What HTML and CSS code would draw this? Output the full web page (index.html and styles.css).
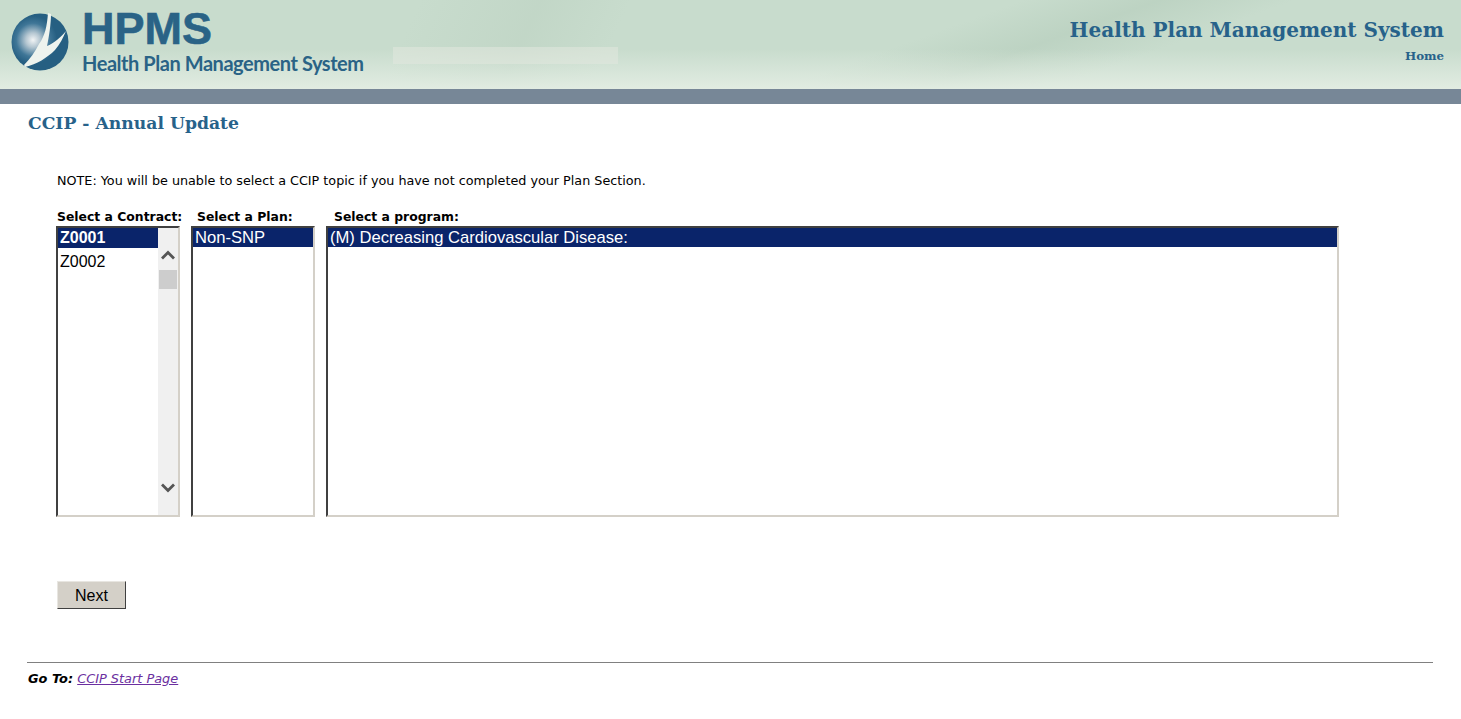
FILE: index.html
```html
<!DOCTYPE html>
<html lang="en">
<head>
<meta charset="utf-8">
<title>CCIP - Annual Update</title>
<link rel="stylesheet" href="styles.css">
</head>
<body>
<header class="header">
  <div class="logo">
    <svg class="logo-mark" width="60" height="60" viewBox="0 0 60 60" aria-hidden="true">
      <defs>
        <radialGradient id="globe" gradientUnits="userSpaceOnUse" cx="23" cy="28" r="24">
          <stop offset="0" stop-color="#f2f4f5"/>
          <stop offset="0.3" stop-color="#b4c6d1"/>
          <stop offset="0.7" stop-color="#3f7697"/>
          <stop offset="1" stop-color="#265f82"/>
        </radialGradient>
      </defs>
      <circle cx="30" cy="30" r="28.5" fill="url(#globe)"/>
      <path d="M38 1 C37 14 35 24 29 32 C25 40 20 47 14 53 L15 55 C27 52 37 46 45 38 C50 32 53 26 56 19 C52 24 43 32 37 34 C39 25 41 12 41 2 Z" fill="#eef3ee"/>
    </svg>
    <div class="logo-text">
      <div class="logo-hpms">HPMS</div>
      <div class="logo-name">Health Plan Management System</div>
    </div>
  </div>
  <div class="patch"></div>
  <div class="header-right">
    <div class="system-title">Health Plan Management System</div>
    <a class="home" href="#">Home</a>
  </div>
</header>
<div class="band"></div>
<main class="main">
  <h1 class="page-title">CCIP - Annual Update</h1>
  <div class="form">
    <p class="note">NOTE: You will be unable to select a CCIP topic if you have not completed your Plan Section.</p>
    <div class="pickers">
      <div class="picker picker-contract">
        <div class="picker-label">Select a Contract:</div>
        <div class="listbox">
          <div class="options">
            <div class="option option-bold selected">Z0001</div>
            <div class="option option-second">Z0002</div>
          </div>
          <div class="scrollbar">
            <svg class="chev" width="16" height="12" viewBox="0 0 16 12" aria-hidden="true"><path d="M2 9.5 L8 3.5 L14 9.5" fill="none" stroke="#555" stroke-width="2.8"/></svg>
            <div class="thumb"></div>
            <svg class="chev chev-down" width="16" height="12" viewBox="0 0 16 12" aria-hidden="true"><path d="M2 2.5 L8 8.5 L14 2.5" fill="none" stroke="#555" stroke-width="2.8"/></svg>
          </div>
        </div>
      </div>
      <div class="picker picker-plan">
        <div class="picker-label">Select a Plan:</div>
        <div class="listbox">
          <div class="options"><div class="option selected">Non-SNP</div></div>
        </div>
      </div>
      <div class="picker picker-program">
        <div class="picker-label">Select a program:</div>
        <div class="listbox">
          <div class="options"><div class="option selected">(M) Decreasing Cardiovascular Disease:</div></div>
        </div>
      </div>
    </div>
    <button class="next" type="button">Next</button>
  </div>
  <footer class="goto">
    <b class="goto-label">Go To:</b> <a class="goto-link" href="#">CCIP Start Page</a>
  </footer>
</main>
</body>
</html>
```
FILE: styles.css
```css
* { box-sizing: border-box; }
html, body { margin: 0; padding: 0; }
body {
  background: #fff;
  color: #000;
  font-family: "DejaVu Sans", Verdana, sans-serif;
  overflow: hidden;
}
.header {
  position: relative;
  height: 89px;
  display: flex;
  justify-content: space-between;
  padding: 11px 17px 0 10px;
  background:
    linear-gradient(180deg, rgba(227,237,227,0) 55%, rgba(227,237,227,0.95) 100%),
    linear-gradient(160deg, rgba(200,220,205,0) 60%, rgba(184,207,190,0.7) 68%, rgba(200,220,205,0) 76%),
    linear-gradient(115deg, rgba(200,220,205,0) 28%, rgba(190,211,195,0.6) 36%, rgba(200,220,205,0) 42%),
    #c8dccd;
}
.logo { display: flex; gap: 11px; align-items: flex-start; }
.logo-mark { margin-top: 1px; }
.logo-text { color: #2a6386; font-family: "Liberation Sans", Arial, sans-serif; }
.logo-hpms {
  font-size: 45px;
  line-height: 36px;
  font-weight: 700;
  height: 36px;
  padding-left: 1px;
  -webkit-text-stroke: 0.6px #2a6386;
}
.logo-name {
  font-family: Lato, sans-serif;
  font-size: 20px;
  letter-spacing: -0.45px;
  line-height: 26px;
  font-weight: 700;
  margin-top: 3px;
  padding-left: 1px;
  white-space: nowrap;
}
.patch {
  position: absolute;
  left: 393px;
  top: 47px;
  width: 225px;
  height: 17px;
  background: rgba(225,232,222,0.55);
}
.header-right { text-align: right; padding-top: 6px; }
.system-title {
  font-family: "DejaVu Serif", Georgia, serif;
  font-weight: 700;
  font-size: 20px;
  line-height: 26px;
  color: #27628a;
  white-space: nowrap;
}
.home {
  display: block;
  margin-top: 5px;
  font-family: "DejaVu Serif", Georgia, serif;
  font-weight: 700;
  font-size: 11.8px;
  line-height: 16px;
  color: #27628a;
  text-decoration: none;
}
.band { height: 15px; background: #778797; }
.main { padding: 0 28px 0 27px; }
.page-title {
  margin: 8px 0 0;
  padding-left: 1px;
  font-family: "DejaVu Serif", Georgia, serif;
  font-weight: 700;
  font-size: 17.2px;
  line-height: 22px;
  color: #27628a;
}
.form { padding: 0 0 0 30px; }
.note {
  margin: 40px 0 0;
  font-size: 12.75px;
  line-height: 14px;
}
.pickers { display: flex; gap: 11px; margin-top: 22px; }
.picker { display: flex; flex-direction: column; }
.picker-contract { width: 124px; margin-left: -1px; }
.picker-plan { width: 124px; }
.picker-program { width: 1013px; }
.picker-label {
  font-size: 12.4px;
  font-weight: 700;
  line-height: 14px;
  height: 16px;
  white-space: nowrap;
}
.picker-contract .picker-label { padding-left: 1px; }
.picker-plan .picker-label { padding-left: 6px; }
.picker-program .picker-label { padding-left: 8px; }
.listbox {
  display: flex;
  height: 291px;
  border: 2px solid;
  border-color: #404040 #d4d0c8 #d4d0c8 #404040;
  background: #fff;
  font-family: "Liberation Sans", Arial, sans-serif;
  font-size: 16.6px;
}
.options { flex: 1; min-width: 0; }
.option { padding-left: 2px; line-height: 19px; height: 19px; white-space: nowrap; }
.selected { background: #0a246a; color: #fff; }
.option-bold { font-weight: 700; font-size: 16px; height: 20px; line-height: 20px; }
.option-second { margin-top: 4px; font-size: 16px; padding-left: 2px; }
.scrollbar {
  width: 20px;
  background: #f0f0f0;
  display: flex;
  flex-direction: column;
  align-items: center;
  padding-top: 21px;
}
.chev { display: block; }
.thumb { width: 18px; height: 19px; margin-top: 9px; background: #cdcdcd; }
.chev-down { margin-top: auto; margin-bottom: 21px; }
.next {
  display: block;
  width: 69px;
  height: 28px;
  margin: 64px 0 0;
  padding: 1px 0 0;
  border: 1px solid;
  border-color: #e8e6e1 #404040 #404040 #e8e6e1;
  background: #d4d0c8;
  color: #000;
  font-family: "Liberation Sans", Arial, sans-serif;
  font-size: 16px;
}
.goto {
  margin-top: 53px;
  padding: 8px 0 0 1px;
  border-top: 1px solid #808080;
  font-size: 12.9px;
  line-height: 16px;
}
.goto-label { font-style: italic; }
.goto-link { font-style: italic; color: #6b2fa0; }
```
